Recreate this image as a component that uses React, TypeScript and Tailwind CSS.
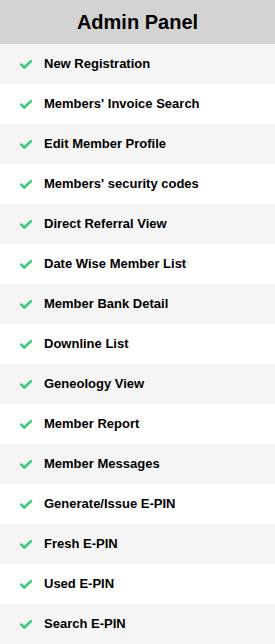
import React from "react";

const items = [
  "New Registration",
  "Members' Invoice Search",
  "Edit Member Profile",
  "Members' security codes",
  "Direct Referral View",
  "Date Wise Member List",
  "Member Bank Detail",
  "Downline List",
  "Geneology View",
  "Member Report",
  "Member Messages",
  "Generate/Issue E-PIN",
  "Fresh E-PIN",
  "Used E-PIN",
  "Search E-PIN",
];

function Check() {
  return (
    <svg width="12" height="9" viewBox="0 0 12 9" className="shrink-0">
      <path d="M1.2 4.6 L4.3 7.6 L10.8 1.2" fill="none" stroke="#2ecc71" strokeWidth="2.4" strokeLinecap="square" strokeLinejoin="miter" />
    </svg>
  );
}

export default function App() {
  return (
    <div className="w-[275px] bg-white" style={{ fontFamily: '"Liberation Sans", Arial, sans-serif' }}>
      <div className="h-[44px] bg-[#d3d3d3] flex items-center justify-center">
        <h1 className="text-[20px] font-bold text-black">Admin Panel</h1>
      </div>
      <ul>
        {items.map((t, i) => (
          <li
            key={t}
            className={`h-[40px] flex items-center pl-[20px] gap-[12px] ${i % 2 === 0 ? "bg-[#f5f5f5]" : "bg-white"}`}
          >
            <Check />
            <span className="text-[13px] font-bold text-black">{t}</span>
          </li>
        ))}
      </ul>
    </div>
  );
}
